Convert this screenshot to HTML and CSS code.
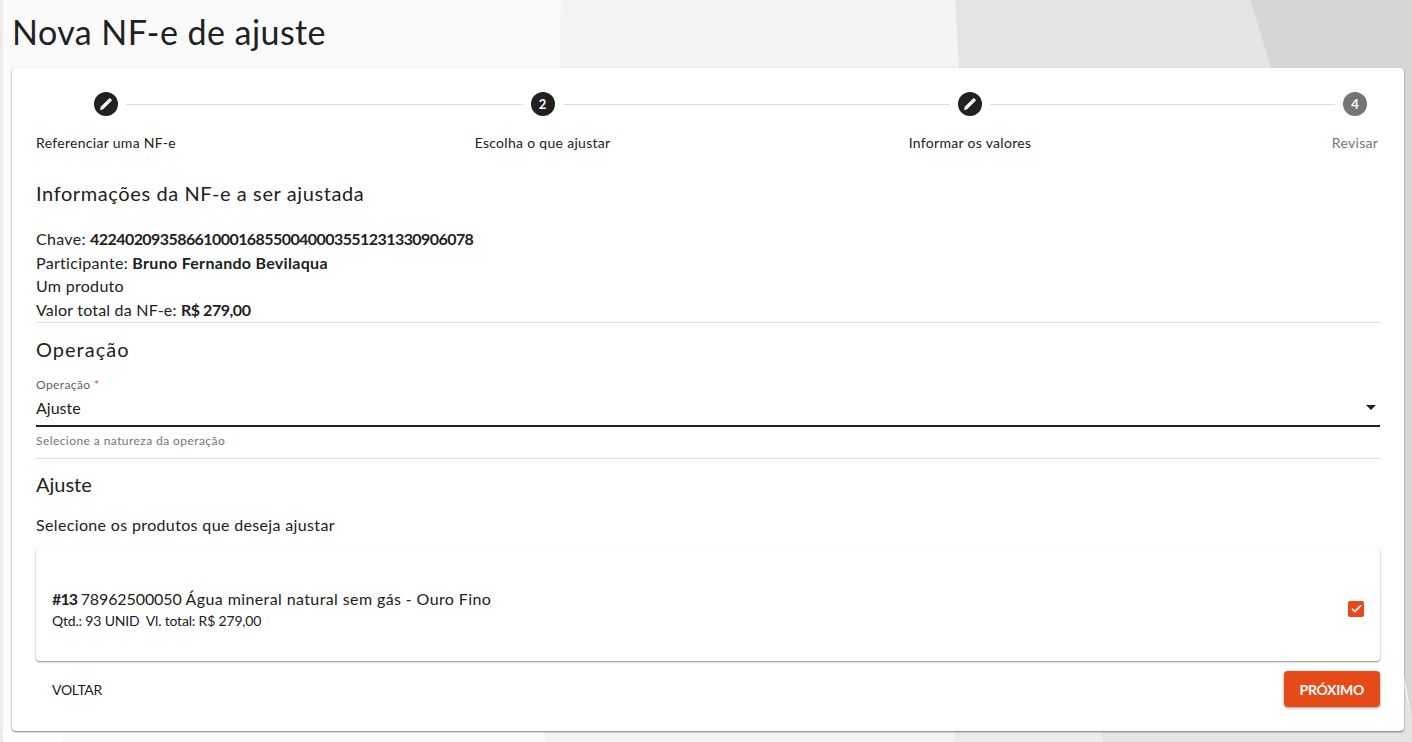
FILE: index.html
```html
<!DOCTYPE html>
<html lang="pt-BR">
  <head>
    <meta charset="UTF-8" />
    <title>Nova NF-e de ajuste</title>
    <link rel="stylesheet" href="styles.css">
  </head>
  <body>
    <svg class="backdrop" viewBox="0 0 1412 742" preserveAspectRatio="none">
      <rect x="0" y="0" width="1412" height="742" fill="#ffffff" />
      <rect x="0" y="0" width="3" height="742" fill="#ececec" />
      <polygon points="3,0 561,0 563,68 545,742 63,742 63,731 3,731" fill="#fafafa" />
      <polygon points="561,0 955,0 959,68 953,742 545,742" fill="#f4f4f4" />
      <polygon points="955,0 1250,0 1271,68 1412,720 1412,742 1103,742 959,68" fill="#e4e4e4" />
      <polygon points="953,742 1103,742 1090,680 960,680" fill="#ececec" />
      <polygon points="1250,0 1412,0 1412,720 1404,675 1271,68" fill="#d6d6d6" />
    </svg>
    <h1 class="page-title">Nova NF-e de ajuste</h1>
    <main class="card">
      <div class="stepper">
        <div class="step">
          <span class="step-icon">
            <svg viewBox="0 0 24 24"><path d="M4 20l1-4.2L16.2 4.6a1.2 1.2 0 0 1 1.7 0l1.5 1.5a1.2 1.2 0 0 1 0 1.7L8.2 19z" /></svg>
          </span>
          <span class="step-label">Referenciar uma NF-e</span>
        </div>
        <div class="step-line line-first"></div>
        <div class="step">
          <span class="step-icon">2</span>
          <span class="step-label">Escolha o que ajustar</span>
        </div>
        <div class="step-line line-second"></div>
        <div class="step">
          <span class="step-icon">
            <svg viewBox="0 0 24 24"><path d="M4 20l1-4.2L16.2 4.6a1.2 1.2 0 0 1 1.7 0l1.5 1.5a1.2 1.2 0 0 1 0 1.7L8.2 19z" /></svg>
          </span>
          <span class="step-label">Informar os valores</span>
        </div>
        <div class="step-line line-third"></div>
        <div class="step step-off">
          <span class="step-icon">4</span>
          <span class="step-label">Revisar</span>
        </div>
      </div>

      <section class="info">
        <h2 class="section-title info-title">Informações da NF-e a ser ajustada</h2>
        <p>Chave: <b class="nfe-key">42240209358661000168550040003551231330906078</b></p>
        <p>Participante: <b>Bruno Fernando Bevilaqua</b></p>
        <p>Um produto</p>
        <p class="info-total">Valor total da NF-e: <b class="money">R$ 279,00</b></p>
      </section>

      <section class="operation">
        <h2 class="section-title operation-title">Operação</h2>
        <div class="field">
          <label class="field-label">Operação <span class="required">*</span></label>
          <div class="field-input">
            <span>Ajuste</span>
            <span class="arrow"></span>
          </div>
          <div class="field-help">Selecione a natureza da operação</div>
        </div>
      </section>

      <section class="adjust">
        <h2 class="section-title adjust-title">Ajuste</h2>
        <p class="adjust-hint">Selecione os produtos que deseja ajustar</p>
        <div class="product">
          <div>
            <div class="product-name"><b class="item-no">#13</b> <span class="code">78962500050</span> Água mineral natural sem gás - Ouro Fino</div>
            <div class="product-meta">Qtd.: 93 UNID&nbsp; Vl. total: R$ 279,00</div>
          </div>
          <span class="checkbox">
            <svg viewBox="0 0 24 24"><path d="M9 16.17 4.83 12l-1.42 1.41L9 19 21 7l-1.41-1.41z" /></svg>
          </span>
        </div>
      </section>

      <div class="actions">
        <button class="btn btn-text">VOLTAR</button>
        <button class="btn btn-primary">PRÓXIMO</button>
      </div>
    </main>
  </body>
</html>
```

FILE: styles.css
```css
* {
  box-sizing: border-box;
  margin: 0;
  padding: 0;
}

html,
body {
  height: 742px;
  overflow: hidden;
}

body {
  color: #212121;
  font-family: "Lato", sans-serif;
  font-size: 16px;
  letter-spacing: 0.3px;
  padding: 0 8px 0 12px;
}

.backdrop {
  position: absolute;
  top: 0;
  left: 0;
  width: 1412px;
  height: 742px;
  z-index: -1;
}

/*HEADER*/
.page-title {
  font-size: 34px;
  font-weight: 400;
  line-height: 40px;
  height: 68px;
  padding-top: 12px;
  padding-left: 0;
  letter-spacing: 0.45px;
}

/*CARD*/
.card {
  width: 1392px;
  height: 663px;
  background-color: #fff;
  border-radius: 4px;
  box-shadow: 0 1px 2px rgba(0, 0, 0, 0.5);
  padding: 24px 24px 0 24px;
}

/*STEPPER*/
.stepper {
  display: flex;
  align-items: flex-start;
  padding: 0 13px 0 58px;
}

.step {
  display: flex;
  flex-direction: column;
  align-items: center;
  gap: 17px;
  width: 24px;
  flex: none;
}

.step-line {
  height: 1px;
  margin: 12px 8px 0;
  background-color: #e0e0e0;
}

.line-first {
  flex: 392;
}

.line-second {
  flex: 383;
}

.line-third {
  flex: 341;
}

.step-icon {
  width: 24px;
  height: 24px;
  flex: none;
  border-radius: 50%;
  background-color: #212121;
  color: #fff;
  font-size: 13px;
  font-weight: 700;
  letter-spacing: 0;
  display: flex;
  align-items: center;
  justify-content: center;
}

.step-icon svg {
  width: 18px;
  height: 18px;
  fill: #fff;
}

.step-label {
  font-size: 14px;
  line-height: 20px;
  white-space: nowrap;
}

.step-off .step-icon {
  background-color: #757575;
}

.step-off .step-label {
  color: #757575;
}

/*SECTIONS*/
.section-title {
  font-size: 20px;
  font-weight: 400;
  line-height: 28px;
  letter-spacing: 0.6px;
}

.operation-title {
  letter-spacing: 1px;
}

.adjust-title {
  letter-spacing: 0;
}

.info {
  margin-top: 26px;
  height: 144px;
  border-bottom: 1px solid #e0e0e0;
  line-height: 23.7px;
}

.info-title {
  margin-bottom: 20px;
}

.info-total {
  letter-spacing: 0.2px;
}

.nfe-key {
  letter-spacing: -0.57px;
}

.money {
  letter-spacing: -0.45px;
}

.item-no {
  letter-spacing: -0.9px;
  margin-right: -1px;
}

.code {
  letter-spacing: -0.1px;
}

.operation {
  padding-top: 12px;
  border-bottom: 1px solid #e0e0e0;
  height: 136px;
}

.field {
  margin-top: 15px;
}

.field-label {
  display: block;
  font-size: 12px;
  line-height: 14px;
  letter-spacing: 0.4px;
  color: #616161;
}

.required {
  color: #e64a19;
}

.field-input {
  display: flex;
  justify-content: space-between;
  align-items: center;
  height: 35px;
  padding: 0 4px 2px 0;
  border-bottom: 2px solid #212121;
  line-height: 24px;
  letter-spacing: 0;
}

.arrow {
  width: 0;
  height: 0;
  border-left: 5px solid transparent;
  border-right: 5px solid transparent;
  border-top: 5px solid #212121;
}

.field-help {
  margin-top: 7px;
  font-size: 12px;
  line-height: 14px;
  letter-spacing: 0.43px;
  color: #757575;
}

.adjust {
  padding-top: 11px;
}

.adjust-hint {
  margin-top: 15px;
  line-height: 24px;
  letter-spacing: 0.35px;
}

.product {
  margin-top: 11px;
  height: 113px;
  padding: 8px 16px 0;
  display: flex;
  justify-content: space-between;
  align-items: center;
  border-radius: 4px;
  box-shadow: 0 1px 2px rgba(0, 0, 0, 0.45);
}

.product-name {
  line-height: 24px;
  letter-spacing: 0.39px;
}

.product-meta {
  font-size: 14px;
  line-height: 20px;
  letter-spacing: -0.18px;
}

.checkbox {
  width: 16px;
  height: 16px;
  border-radius: 2px;
  background-color: #e64a19;
  display: flex;
  align-items: center;
  justify-content: center;
}

.checkbox svg {
  width: 13px;
  height: 13px;
  fill: #fff;
  stroke: #fff;
  stroke-width: 1.5;
}

/*ACTIONS*/
.actions {
  margin-top: 10px;
  display: flex;
  justify-content: space-between;
  align-items: flex-start;
}

.btn {
  border: 0;
  border-radius: 4px;
  height: 36px;
  padding: 0 16px;
  font-family: inherit;
  font-size: 14px;
  letter-spacing: -0.3px;
  background: none;
  color: #212121;
}

.btn-primary {
  background-color: #e64a19;
  color: #fff;
  font-weight: 700;
  box-shadow: 0 1px 3px rgba(0, 0, 0, 0.4);
}
```
